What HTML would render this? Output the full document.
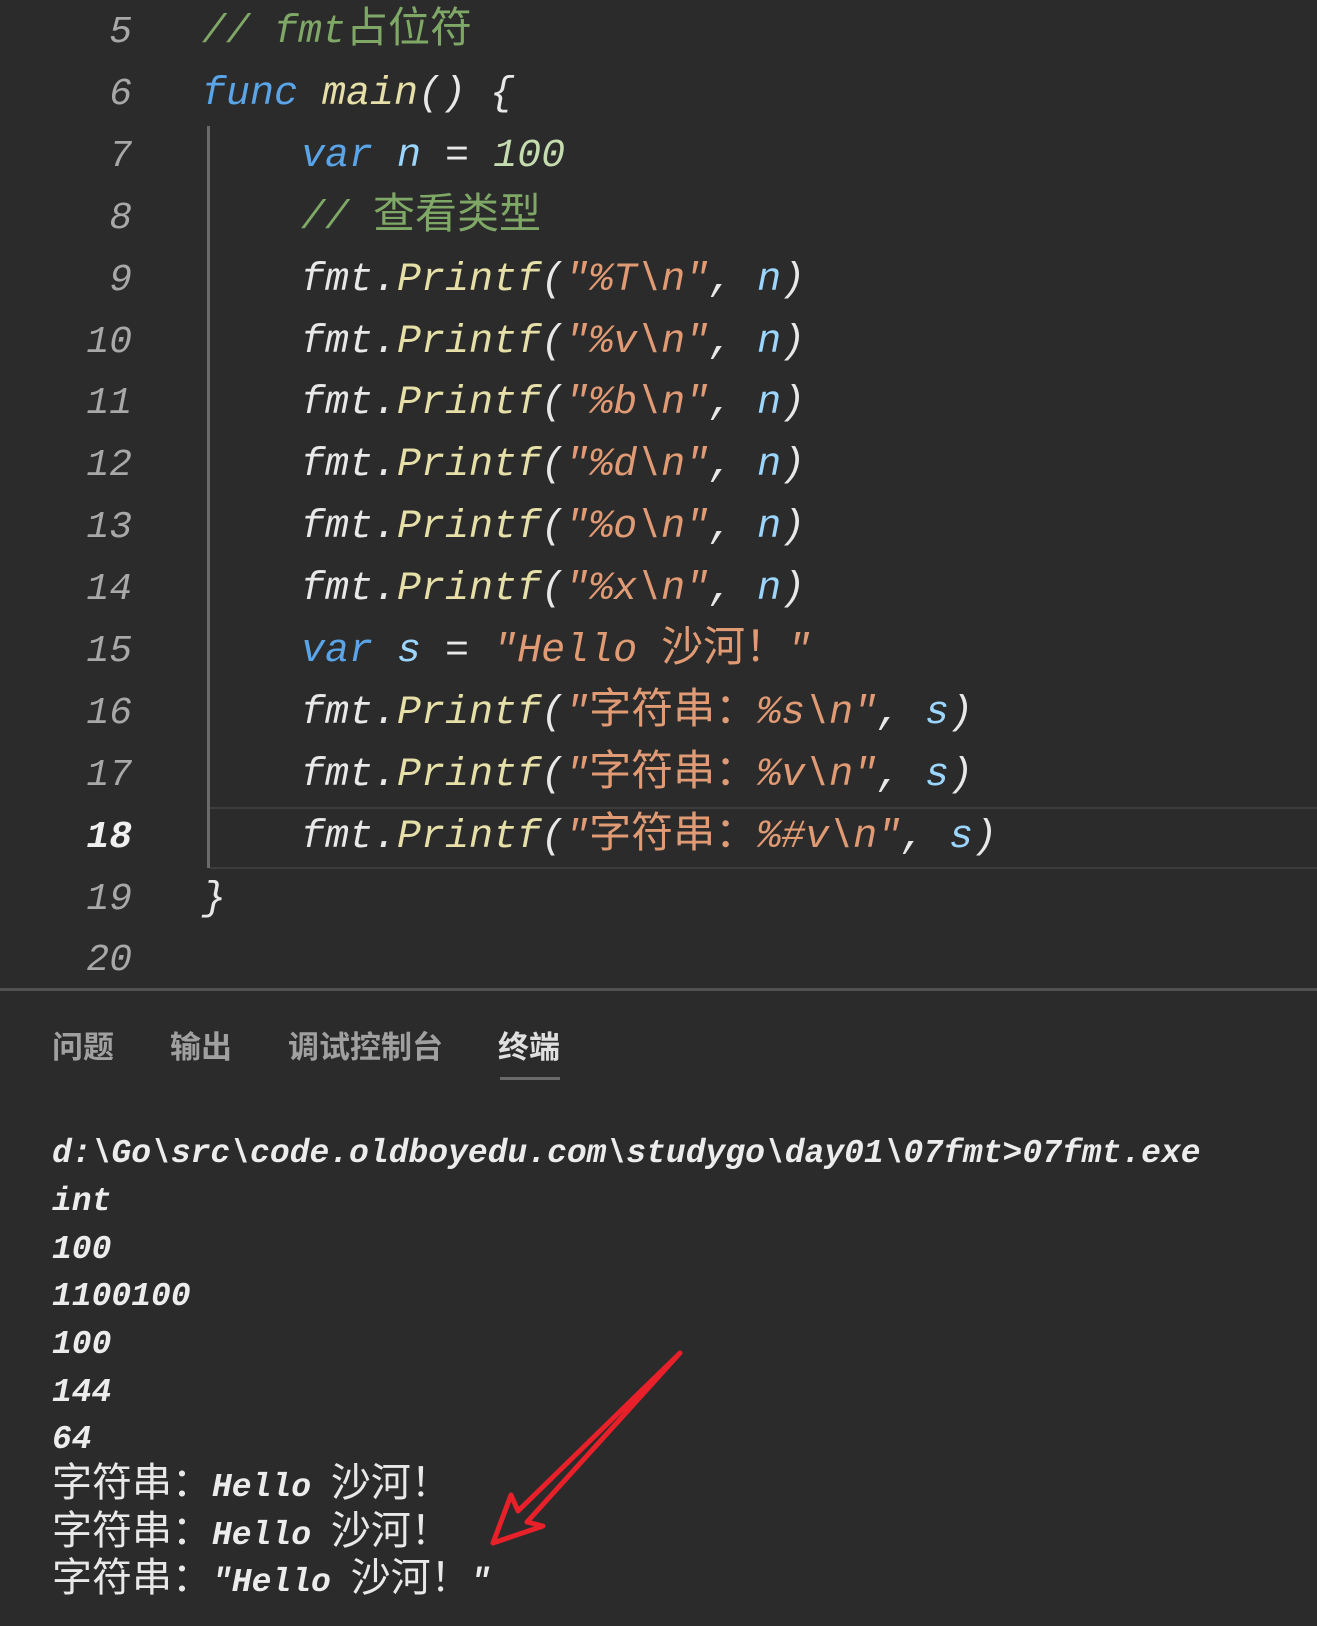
<!DOCTYPE html>
<html><head><meta charset="utf-8"><style>
html,body{margin:0;padding:0}
body{width:1317px;height:1626px;background:#2b2b2b;position:relative;overflow:hidden;font-family:"Liberation Mono","Noto Sans CJK SC",monospace}
.ln{position:absolute;left:0;width:132px;text-align:right;font-style:italic;font-size:38px;color:#a8a8a8;height:62px;line-height:62px}
.cl{position:absolute;white-space:pre;font-style:italic;font-size:40px;height:62px;line-height:62px;color:#e8e8e8}
.cj{font-family:"Noto Sans CJK SC",sans-serif;font-style:normal;font-size:42px;line-height:0}
.cm{color:#7fa866}.kw{color:#5aa4e8}.fn{color:#e6e0a8}.st{color:#e09a74}.nu{color:#c5dcb0}.vr{color:#9cd6ff}.pu{color:#e0e0e0}
.tl{position:absolute;left:52px;white-space:pre;font-style:italic;font-weight:bold;font-size:33px;color:#ececec;height:48px;line-height:48px}
.tl .cj{font-size:40px;color:#e8e8e8;font-weight:normal}
.tab{position:absolute;top:1022px;font-family:"Noto Sans CJK SC",sans-serif;font-size:31px;font-weight:bold;color:#a0a0a0}
</style></head><body>
<div style="position:absolute;left:207px;top:126px;width:3px;height:742px;background:#6a6a6a"></div>
<div style="position:absolute;left:210px;top:807px;right:0;height:58px;border-top:2px solid #3c3c3c;border-bottom:2px solid #3c3c3c"></div>

<div class="ln" style="top:2px">5</div>
<div class="ln" style="top:64px">6</div>
<div class="ln" style="top:126px">7</div>
<div class="ln" style="top:188px">8</div>
<div class="ln" style="top:250px">9</div>
<div class="ln" style="top:312px">10</div>
<div class="ln" style="top:373px">11</div>
<div class="ln" style="top:435px">12</div>
<div class="ln" style="top:497px">13</div>
<div class="ln" style="top:559px">14</div>
<div class="ln" style="top:621px">15</div>
<div class="ln" style="top:683px">16</div>
<div class="ln" style="top:745px">17</div>
<div class="ln" style="top:807px;color:#f0f0f0;font-weight:bold">18</div>
<div class="ln" style="top:869px">19</div>
<div class="ln" style="top:930px">20</div>

<div class="cl cm" style="left:202px;top:2px">// fmt<span class="cj">占位符</span></div>
<div class="cl" style="left:202px;top:64px"><span class="kw">func</span> <span class="fn">main</span>() {</div>
<div class="cl" style="left:301px;top:126px"><span class="kw">var</span> <span class="vr">n</span> = <span class="nu">100</span></div>
<div class="cl cm" style="left:301px;top:188px">// <span class="cj">查看类型</span></div>
<div class="cl" style="left:301px;top:250px">fmt.<span class="fn">Printf</span>(<span class="st">"%T\n"</span>, <span class="vr">n</span>)</div>
<div class="cl" style="left:301px;top:312px">fmt.<span class="fn">Printf</span>(<span class="st">"%v\n"</span>, <span class="vr">n</span>)</div>
<div class="cl" style="left:301px;top:373px">fmt.<span class="fn">Printf</span>(<span class="st">"%b\n"</span>, <span class="vr">n</span>)</div>
<div class="cl" style="left:301px;top:435px">fmt.<span class="fn">Printf</span>(<span class="st">"%d\n"</span>, <span class="vr">n</span>)</div>
<div class="cl" style="left:301px;top:497px">fmt.<span class="fn">Printf</span>(<span class="st">"%o\n"</span>, <span class="vr">n</span>)</div>
<div class="cl" style="left:301px;top:559px">fmt.<span class="fn">Printf</span>(<span class="st">"%x\n"</span>, <span class="vr">n</span>)</div>
<div class="cl" style="left:301px;top:621px"><span class="kw">var</span> <span class="vr">s</span> = <span class="st">"Hello <span class="cj">沙河！</span>"</span></div>
<div class="cl" style="left:301px;top:683px">fmt.<span class="fn">Printf</span>(<span class="st">"<span class="cj">字符串：</span>%s\n"</span>, <span class="vr">s</span>)</div>
<div class="cl" style="left:301px;top:745px">fmt.<span class="fn">Printf</span>(<span class="st">"<span class="cj">字符串：</span>%v\n"</span>, <span class="vr">s</span>)</div>
<div class="cl" style="left:301px;top:807px">fmt.<span class="fn">Printf</span>(<span class="st">"<span class="cj">字符串：</span>%#v\n"</span>, <span class="vr">s</span>)</div>
<div class="cl" style="left:202px;top:869px">}</div>

<div style="position:absolute;left:0;right:0;top:988px;height:3px;background:#505050"></div>
<div class="tab" style="left:52px">问题</div>
<div class="tab" style="left:170px">输出</div>
<div class="tab" style="left:288px">调试控制台</div>
<div class="tab" style="left:498px;color:#e0e0e0">终端</div>
<div style="position:absolute;left:500px;top:1077px;width:60px;height:3px;background:#6a6a6a"></div>

<div class="tl" style="top:1130px">d:\Go\src\code.oldboyedu.com\studygo\day01\07fmt&gt;07fmt.exe</div>
<div class="tl" style="top:1178px">int</div>
<div class="tl" style="top:1226px">100</div>
<div class="tl" style="top:1273px">1100100</div>
<div class="tl" style="top:1321px">100</div>
<div class="tl" style="top:1369px">144</div>
<div class="tl" style="top:1416px">64</div>
<div class="tl" style="top:1464px"><span class="cj">字符串：</span>Hello <span class="cj">沙河！</span></div>
<div class="tl" style="top:1512px"><span class="cj">字符串：</span>Hello <span class="cj">沙河！</span></div>
<div class="tl" style="top:1559px"><span class="cj">字符串：</span>"Hello <span class="cj">沙河！</span>"</div>

<svg style="position:absolute;left:0;top:0" width="1317" height="1626">
<polygon points="493,1543 511,1495 518,1511 680,1353 527,1522 543,1526" fill="none" stroke="#e8202a" stroke-width="5" stroke-linejoin="round"/>
</svg>
</body></html>
